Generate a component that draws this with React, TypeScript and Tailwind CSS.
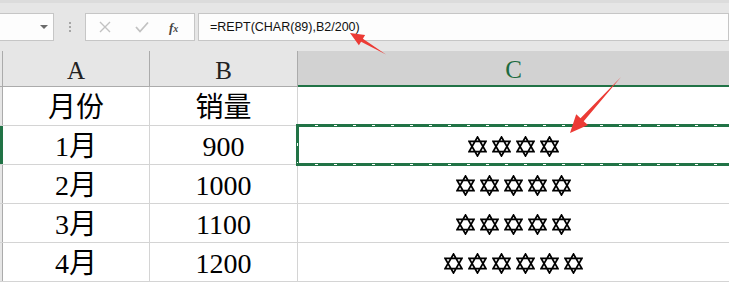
import React from "react";

const serif = "font-['Liberation_Serif','Noto_Sans_CJK_SC',serif]";

const rows = [
  { a: "月份", b: "销量", n: 0, sel: false },
  { a: "1月", b: "900", n: 4, sel: true },
  { a: "2月", b: "1000", n: 5, sel: false },
  { a: "3月", b: "1100", n: 5, sel: false },
  { a: "4月", b: "1200", n: 6, sel: false },
];

function Star() {
  return (
    <svg width="19" height="21" viewBox="0 0 19 21" className="shrink-0">
      <path
        d="M9.5 1 L18 15.7 L1 15.7 Z M9.5 20 L1 5.3 L18 5.3 Z"
        fill="none"
        stroke="#000"
        strokeWidth="1.7"
        strokeLinejoin="miter"
      />
    </svg>
  );
}

function Selection() {
  const dashH =
    "bg-[repeating-linear-gradient(90deg,transparent_0_16px,#ffffff_16px_19px)]";
  const dashV =
    "bg-[repeating-linear-gradient(180deg,transparent_0_16px,#ffffff_16px_19px)]";
  return (
    <div className="absolute top-[-2px] left-[-2px] right-[-3px] bottom-[-2px] border-[3px] border-[#217346] pointer-events-none">
      <div className={`absolute top-[-2px] left-0 right-0 h-[1px] ${dashH}`} />
      <div className={`absolute bottom-[-2px] left-0 right-0 h-[1px] ${dashH}`} />
      <div className={`absolute left-[-2px] top-0 bottom-0 w-[1px] ${dashV}`} />
    </div>
  );
}

export default function App() {
  return (
    <div className="relative w-[729px] h-[286px] overflow-hidden bg-white">
      {/* toolbar */}
      <div className="h-[51px] bg-[#e6e6e6] border-t-[3px] border-[#dcdcdc] flex items-start pt-[10px]">
        <div className="relative w-[54px] h-[28px] bg-[#fdfdfd] border-y border-r border-[#c6c6c6]">
          <div className="absolute left-[40px] top-[11px] w-0 h-0 border-l-[4px] border-r-[4px] border-t-[4px] border-l-transparent border-r-transparent border-t-[#6b6b6b]" />
        </div>
        <div className="w-[31px] h-[28px] flex flex-col items-center justify-center gap-[2px]">
          <div className="w-[2px] h-[2px] bg-[#a6a6a6]" />
          <div className="w-[2px] h-[2px] bg-[#a6a6a6]" />
          <div className="w-[2px] h-[2px] bg-[#a6a6a6]" />
        </div>
        <div className="w-[110px] h-[28px] bg-[#fdfdfd] border border-[#c6c6c6] flex items-center">
          <svg width="12" height="12" viewBox="0 0 12 12" className="ml-[13px]">
            <path d="M1 1 L11 11 M11 1 L1 11" stroke="#c2c2c2" strokeWidth="1.4" />
          </svg>
          <svg width="14" height="12" viewBox="0 0 14 12" className="ml-[24px]">
            <path d="M1 6 L5 10.5 L13 1.5" stroke="#c2c2c2" strokeWidth="1.8" fill="none" />
          </svg>
          <span className="ml-[20px] text-[13px] italic text-[#444] font-['Liberation_Serif',serif] font-bold leading-none">
            f<span className="text-[10px]">x</span>
          </span>
        </div>
        <div className="ml-[3px] flex-1 h-[28px] bg-[#fdfdfd] border border-[#c6c6c6] flex items-center pl-[11px]">
          <span className="text-[12.5px] text-[#111] font-['Liberation_Sans',sans-serif] leading-none">
            =REPT(CHAR(89),B2/200)
          </span>
        </div>
      </div>

      {/* column headers */}
      <div className={`flex h-[36px] border-b border-[#ababab] bg-[#e6e6e6] ${serif}`}>
        <div className="w-[3px] border-r border-[#ababab]" />
        <div className="w-[147px] border-r border-[#ababab] flex items-center justify-center pt-[4px] text-[25px] text-[#222]">
          A
        </div>
        <div className="w-[148px] border-r border-[#ababab] flex items-center justify-center pt-[4px] text-[25px] text-[#222]">
          B
        </div>
        <div className="flex-1 bg-[#d2d2d2] border-b-2 border-[#217346] -mb-[1px] flex items-center justify-center pt-[4px] text-[25px] text-[#1e6b40]">
          C
        </div>
      </div>

      {/* rows */}
      {rows.map((r, i) => (
        <div key={i} className={`flex h-[39px] border-b border-[#d4d4d4] ${serif}`}>
          <div
            className={`w-[3px] border-r ${r.sel ? "bg-[#217346] border-[#217346]" : "bg-[#e6e6e6] border-[#ababab]"}`}
          />
          <div className="w-[147px] border-r border-[#d4d4d4] flex items-center justify-center pt-[3px] text-[28px] text-black leading-none">
            {r.a}
          </div>
          <div className="w-[148px] border-r border-[#d4d4d4] flex items-center justify-center pt-[3px] text-[28px] text-black leading-none">
            {r.b}
          </div>
          <div className="relative flex-1 flex items-center justify-center gap-[5px] pt-[3px]">
            {Array.from({ length: r.n }).map((_, k) => (
              <Star key={k} />
            ))}
            {r.sel && <Selection />}
          </div>
        </div>
      ))}

      {/* annotation arrows */}
      <svg className="absolute inset-0 pointer-events-none" width="729" height="286" viewBox="0 0 729 286">
        <polygon
          points="350,33 365.1,35.1 362.9,38.7 386,54.5 361.1,41.7 358.9,45.3"
          fill="#ec3b35"
        />
        <polygon
          points="570,133 576.2,114.3 580.5,118.2 621,77 583.7,121.2 588,125.1"
          fill="#ec3b35"
        />
      </svg>
    </div>
  );
}
